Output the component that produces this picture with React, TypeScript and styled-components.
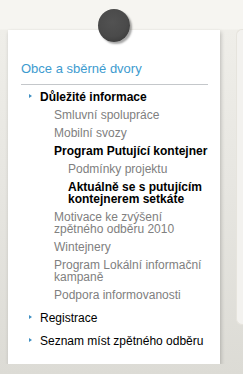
import styled, { createGlobalStyle } from 'styled-components';

const GlobalStyle = createGlobalStyle`
  html, body, #root {
    height: 100%;
  }
  body {
    margin: 0;
    font-family: "Liberation Sans", Arial, sans-serif;
    background: linear-gradient(
      #f6f5f1 0,
      #f6f5f1 29px,
      #efeee9 30px,
      #e6e5e0 200px,
      #dcdbd5 100%
    );
  }
`;

const Page = styled.div`
  display: flex;
  align-items: flex-start;
  gap: 16px;
  padding: 30px 0 0 8px;
  overflow: hidden;
`;

const Card = styled.div`
  position: relative;
  flex: 0 0 212px;
  box-sizing: border-box;
  padding: 31px 12px 14px 13px;
  background: #fff;
  box-shadow: 1px 2px 4px rgba(0, 0, 0, 0.22);
`;

const Pin = styled.div`
  position: absolute;
  top: -21px;
  left: 90px;
  width: 32px;
  height: 33px;
  border-radius: 50%;
  background: radial-gradient(circle at 45% 40%, #525252 0, #4a4a4a 55%, #3c3c3c 80%, #262626 100%);
  box-shadow: 2px 2px 2px rgba(0, 0, 0, 0.35);
`;

const Title = styled.h2`
  margin: 0;
  padding-bottom: 7px;
  border-bottom: 1px solid #c4c7ca;
  font-size: 13px;
  line-height: 16px;
  font-weight: normal;
  color: #3d9bcf;
`;

const Menu = styled.ul`
  list-style: none;
  margin: 0;
  padding: 3px 0 0;
`;

const TopItem = styled.li`
  position: relative;
  padding-left: 19px;

  & + & {
    margin-top: 5px;
  }

  &::before {
    content: '';
    position: absolute;
    left: 8px;
    top: 6px;
    border-style: solid;
    border-width: 2.5px 0 2.5px 3px;
    border-color: transparent transparent transparent #3f8fc2;
  }
`;

const SubMenu = styled.ul`
  list-style: none;
  margin: 0;
  padding: 0 0 0 14px;
`;

const Link = styled.a<{ $tone?: 'dark' | 'muted'; $bold?: boolean }>`
  display: block;
  padding: 3px 0;
  font-size: 12px;
  line-height: 12px;
  font-weight: ${({ $bold }) => ($bold ? 'bold' : 'normal')};
  color: ${({ $tone }) => ($tone === 'muted' ? '#808080' : '#000')};
  text-decoration: none;
  cursor: pointer;
`;

const SidePanel = styled.div`
  flex: 1 0 40px;
  height: 294px;
  margin-top: -1px;
  border: 1px solid #e6e4dd;
  border-right: none;
  border-radius: 6px 0 0 6px;
  background: #f3f2ef;
`;

export default function App() {
  return (
    <>
      <GlobalStyle />
      <Page>
        <Card>
          <Pin />
          <Title>Obce a sběrné dvory</Title>
          <Menu>
            <TopItem>
              <Link $bold>Důležité informace</Link>
              <SubMenu>
                <li><Link $tone="muted">Smluvní spolupráce</Link></li>
                <li><Link $tone="muted">Mobilní svozy</Link></li>
                <li>
                  <Link $bold>Program Putující kontejner</Link>
                  <SubMenu>
                    <li><Link $tone="muted">Podmínky projektu</Link></li>
                    <li><Link $bold>Aktuálně se s putujícím kontejnerem setkáte</Link></li>
                  </SubMenu>
                </li>
                <li><Link $tone="muted">Motivace ke zvýšení zpětného odběru 2010</Link></li>
                <li><Link $tone="muted">Wintejnery</Link></li>
                <li><Link $tone="muted">Program Lokální informační kampaně</Link></li>
                <li><Link $tone="muted">Podpora informovanosti</Link></li>
              </SubMenu>
            </TopItem>
            <TopItem>
              <Link>Registrace</Link>
            </TopItem>
            <TopItem>
              <Link>Seznam míst zpětného odběru</Link>
            </TopItem>
          </Menu>
        </Card>
        <SidePanel />
      </Page>
    </>
  );
}
